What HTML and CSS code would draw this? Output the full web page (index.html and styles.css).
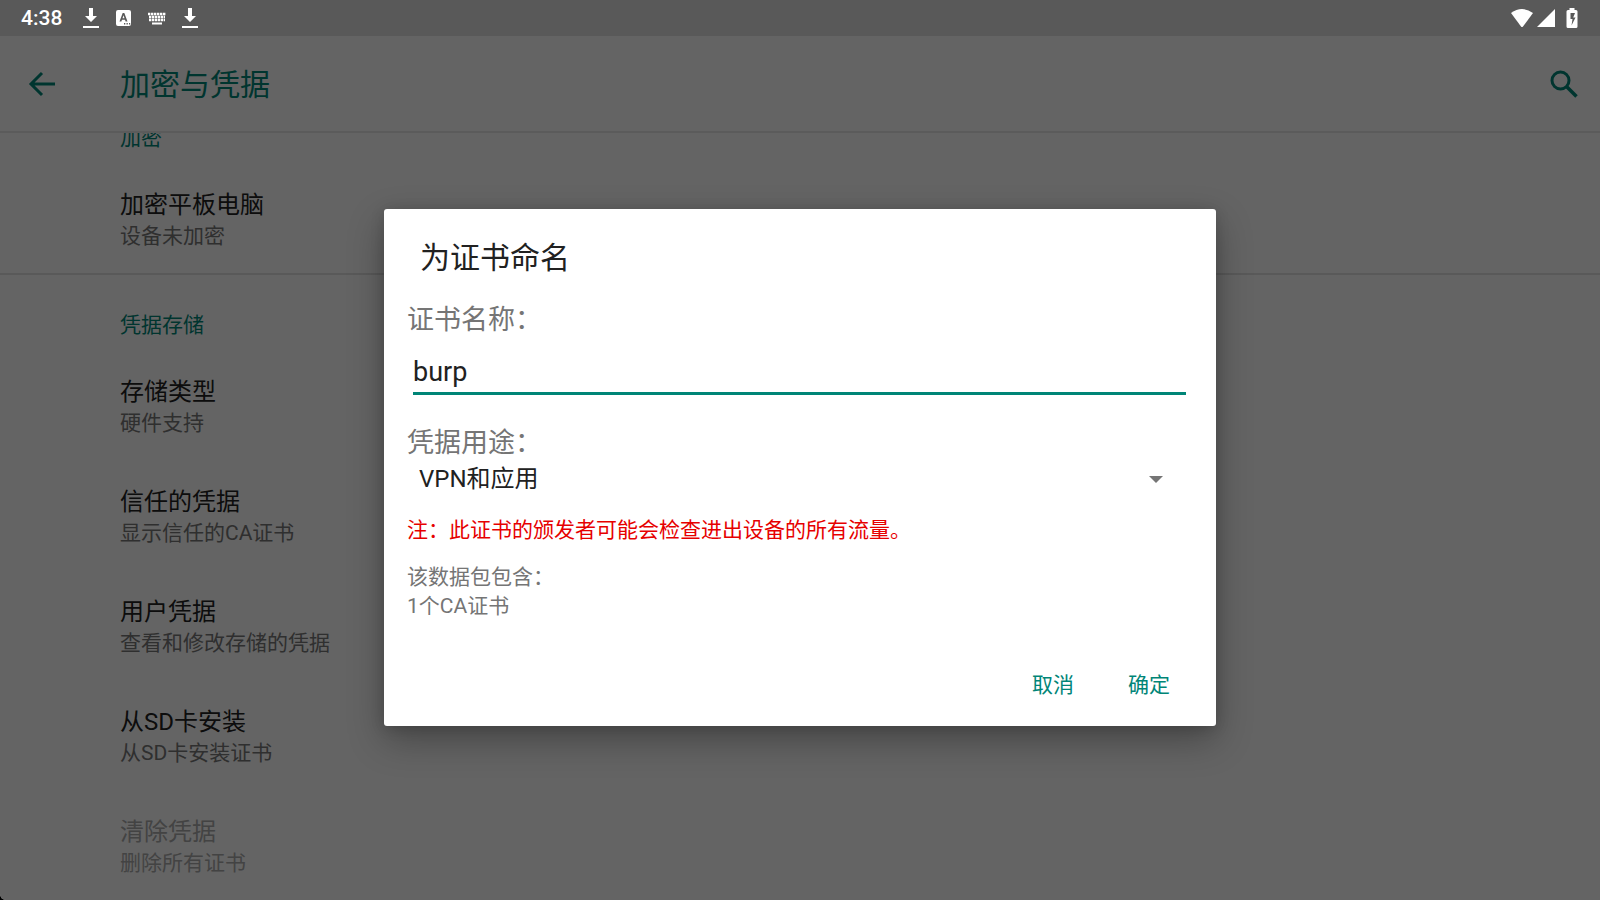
FILE: index.html
```
<!DOCTYPE html>
<html lang="zh-CN">
<head>
    <meta charset="UTF-8">
    <meta name="viewport" content="width=device-width, initial-scale=1.0">
    <title>加密与凭据</title>
    <link rel="stylesheet" href="styles.css">
</head>
<body>
    <div class="screen">
        <div class="statusbar">
            <span class="clock">4:38</span>
            <div class="notifications">
                <svg width="16" height="22" viewBox="0 0 16 22"><path d="M6 1h4v8h4l-6 6-6-6h4zM0 19h16v2H0z"/></svg>
                <svg width="16" height="22" viewBox="0 0 16 22"><path fill-rule="evenodd" d="M2 3h11a2 2 0 0 1 2 2v12a2 2 0 0 1-2 2H2a2 2 0 0 1-2-2V5a2 2 0 0 1 2-2zM6.700 6L3.500 14.500h1.900l.6-1.800h3l.6 1.800h1.900L8.300 6zM7.500 8.200l1 3h-2zM8 16v1.500h1.300V16zM10.500 16v1.500h1.300V16zM13 16v1.500h1.200V16z"/></svg>
                <svg class="keyboard" width="20" height="22" viewBox="0 0 20 22"><path d="M1 7h18M2 10h16M2 13h16" fill="none" stroke="#fff" stroke-width="2.400" stroke-dasharray="2.400 .6"/><path d="M5 15.500h10v2H5z"/></svg>
                <svg width="16" height="22" viewBox="0 0 16 22"><path d="M6 1h4v8h4l-6 6-6-6h4zM0 19h16v2H0z"/></svg>
            </div>
            <div class="system">
                <svg width="24" height="20" viewBox="0 0 24 20"><path d="M1 5Q12-3 23 5L13 18.500q-1 1-2 0z"/></svg>
                <svg width="20" height="20" viewBox="0 0 20 20"><path d="M19 1v18H1z"/></svg>
                <svg width="12" height="20" viewBox="0 0 12 20"><path fill-rule="evenodd" d="M3.500 0h5v2H10q1.500 0 1.500 1.500v15Q11.500 20 10 20H2Q.5 20 .5 18.500v-15Q.5 2 2 2h1.500zM4.500 5v6h2l-1 6.500 4-8H7.200L9 5z"/></svg>
            </div>
        </div>

        <header class="toolbar">
            <button type="button" class="icon-button" aria-label="返回">
                <svg width="28" height="28" viewBox="0 0 28 28"><path d="M27 14H4M14 3L3 14l11 11" fill="none" stroke="currentColor" stroke-width="3"/></svg>
            </button>
            <h1>加密与凭据</h1>
            <button type="button" class="icon-button" aria-label="搜索">
                <svg width="28" height="28" viewBox="0 0 28 28"><circle cx="10.500" cy="10.500" r="8.500" fill="none" stroke="currentColor" stroke-width="3"/><path d="M17 17l9.500 9.500" fill="none" stroke="currentColor" stroke-width="3.500"/></svg>
            </button>
        </header>

        <main class="settings">
            <section class="group">
                <h2>加密</h2>
                <div class="item">
                    <h3>加密平板电脑</h3>
                    <p>设备未加密</p>
                </div>
            </section>
            <section class="group">
                <h2>凭据存储</h2>
                <div class="item">
                    <h3>存储类型</h3>
                    <p>硬件支持</p>
                </div>
                <div class="item">
                    <h3>信任的凭据</h3>
                    <p>显示信任的CA证书</p>
                </div>
                <div class="item">
                    <h3>用户凭据</h3>
                    <p>查看和修改存储的凭据</p>
                </div>
                <div class="item">
                    <h3>从SD卡安装</h3>
                    <p>从SD卡安装证书</p>
                </div>
                <div class="item disabled">
                    <h3>清除凭据</h3>
                    <p>删除所有证书</p>
                </div>
            </section>
        </main>

        <div class="backdrop">
            <form class="dialog" role="dialog" aria-labelledby="dialogTitle">
                <h2 id="dialogTitle">为证书命名</h2>
                <label for="certName">证书名称：</label>
                <input type="text" id="certName" name="certName" value="burp">
                <label for="usage">凭据用途：</label>
                <div class="select">
                    <select id="usage" name="usage">
                        <option selected>VPN和应用</option>
                        <option>WLAN</option>
                    </select>
                </div>
                <p class="warning">注：此证书的颁发者可能会检查进出设备的所有流量。</p>
                <p class="package">该数据包包含：<br>1个CA证书</p>
                <div class="actions">
                    <button type="button">取消</button>
                    <button type="button">确定</button>
                </div>
            </form>
        </div>
    </div>
</body>
</html>
```
FILE: styles.css
```
* { box-sizing: border-box; }
body {
    margin: 0;
    background-color: #000;
    font-family: Roboto, "Noto Sans CJK SC", sans-serif;
    color: #212121;
}
h1, h2, h3, p { margin: 0; font-weight: 400; }
button, input, select { font-family: inherit; border: none; background: none; border-radius: 0; outline: none; }
button { padding: 0; cursor: pointer; }
svg { display: block; }

.screen {
    position: relative;
    display: flex;
    flex-direction: column;
    height: 100vh;
    overflow: hidden;
    background-color: #fafafa;
    border-bottom-left-radius: 6px;
}

/* status bar stays above the dimmed area */
.statusbar {
    position: relative;
    z-index: 3;
    flex: none;
    display: flex;
    align-items: center;
    height: 36px;
    padding: 0 22px 0 21px;
    background-color: #595959;
    color: #fff;
    fill: #fff;
}
.clock { font-size: 21px; font-weight: 500; line-height: 36px; }
.notifications { display: flex; align-items: center; gap: 17px; margin-left: 21px; }
.keyboard { margin: 0 -2px; }
.system { display: flex; align-items: center; gap: 2px; margin-left: auto; }
.system svg:last-child { margin-left: 8px; }

.toolbar {
    position: relative;
    z-index: 1;
    flex: none;
    display: flex;
    align-items: center;
    height: 97px;
    padding: 0 22px 0 28px;
    background-color: #fafafa;
    border-bottom: 2px solid #e4e4e4;
    color: #008577;
}
.toolbar h1 { flex: 1; margin-left: 64px; font-size: 30px; line-height: 44px; padding-top: 2px; }
.icon-button { color: inherit; }

.settings { flex: 1; min-height: 0; overflow: hidden; }
.group h2 { padding: 35px 0 11px 120px; font-size: 21px; line-height: 30px; color: #008577; }
.group + .group { margin-top: -1px; border-top: 2px solid #dedede; }
/* list is scrolled a little way under the toolbar */
.group:first-child { margin-top: -45px; }
.item { padding: 23px 24px 25px 120px; }
.item h3 { font-size: 24px; line-height: 36px; }
.item p { font-size: 21px; line-height: 26px; color: #757575; }
.item.disabled h3, .item.disabled p { color: #a8a8a8; }

.backdrop {
    position: absolute;
    inset: 36px 0 0 0;
    z-index: 2;
    display: flex;
    align-items: center;
    justify-content: center;
    padding-bottom: 1px;
    background-color: rgba(0, 0, 0, 0.6);
}
.dialog {
    display: flex;
    flex-direction: column;
    width: 52%;
    padding: 28px 24px 16px 23px;
    background-color: #fff;
    border-radius: 3px;
    box-shadow: 0 14px 36px rgba(0, 0, 0, 0.3), 0 2px 14px rgba(0, 0, 0, 0.15);
}
.dialog h2 { padding-left: 13px; margin-bottom: 23px; font-size: 30px; line-height: 42px; }
.dialog label { font-size: 27px; line-height: 36px; color: #757575; }
.dialog input {
    height: 54px;
    margin: 3px 6px 30px;
    padding: 13px 0 2px;
    border-bottom: 3px solid #008577;
    font-size: 27px;
    line-height: 36px;
    color: #212121;
}
.select { position: relative; }
.select::after {
    content: "";
    position: absolute;
    right: 29px;
    top: 15px;
    border: 7px solid transparent;
    border-top-color: #757575;
    border-bottom: none;
    pointer-events: none;
}
.select select {
    width: 100%;
    height: 36px;
    padding: 0 48px 0 12px;
    appearance: none;
    font-size: 24px;
    line-height: 36px;
    color: #212121;
}
.warning { margin-top: 18px; font-size: 21px; line-height: 30px; color: #e60000; }
.package { margin-top: 18px; font-size: 21px; line-height: 29px; color: #757575; }
.actions { display: flex; justify-content: flex-end; gap: 10px; margin-top: 35px; }
.actions button { height: 54px; padding: 0 22px; font-size: 21px; color: #008577; }
```
